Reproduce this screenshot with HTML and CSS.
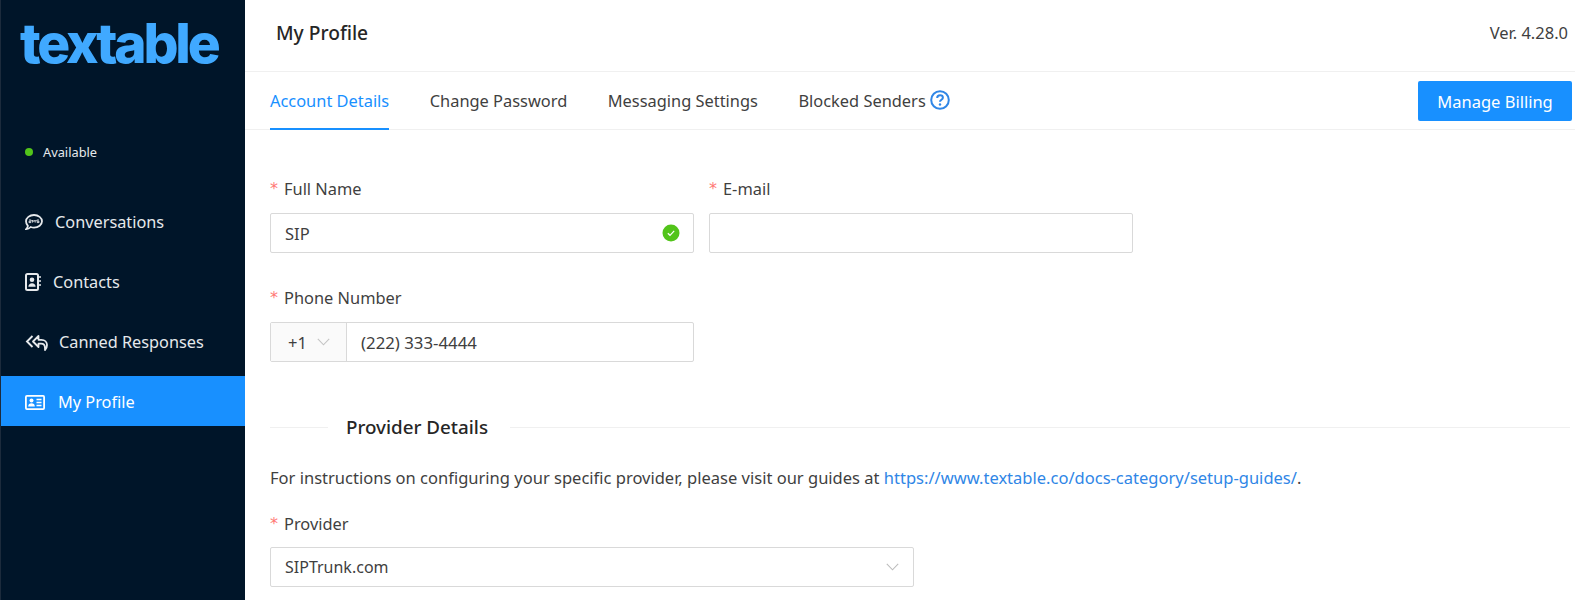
FILE: index.html
```html
<!DOCTYPE html>
<html lang="en">
<head>
<meta charset="utf-8">
<title>My Profile</title>
<link rel="stylesheet" href="styles.css">
</head>
<body>
<div class="app">
  <aside class="sidebar">
    <div class="logo">textable</div>
    <div class="status"><span class="dot"></span><span>Available</span></div>
    <nav class="nav">
      <a class="nav-item">
        <svg class="nav-icon" width="18" height="17" viewBox="0 0 18 17"><path d="M9 1c4.400 0 8 2.800 8 6.300s-3.600 6.300-8 6.300c-1.200 0-2.300-.2-3.300-.6-.9 1-2.500 2.200-4.500 2.200.8-.9 1.500-2.100 1.700-3.300C1.800 10.700 1 9.100 1 7.300 1 3.800 4.600 1 9 1z" fill="none" stroke="currentColor" stroke-width="1.800"/><path d="M4 6h2.200v1.300H4v1.300h2.200M7.600 8.600V6l1.300 1.600L10.200 6v2.600M14 6h-2.200v1.300H14v1.300h-2.200" fill="none" stroke="currentColor" stroke-width=".9"/></svg>
        <span>Conversations</span>
      </a>
      <a class="nav-item contacts">
        <svg class="nav-icon" width="16" height="18" viewBox="0 0 16 18"><rect x="1" y="1" width="12" height="16" rx="1.500" fill="none" stroke="currentColor" stroke-width="2"/><circle cx="7" cy="6.800" r="2.300" fill="currentColor"/><path d="M3.400 13.800c0-2.300 1.500-3.500 3.600-3.500s3.600 1.200 3.600 3.500z" fill="currentColor"/><path d="M14 4h2M14 8h2M14 12h2" stroke="currentColor" stroke-width="1.600"/></svg>
        <span>Contacts</span>
      </a>
      <a class="nav-item canned">
        <svg class="nav-icon" width="23" height="17" viewBox="0 0 23 17"><path d="M7.500 2 2 7.500 7.500 13" fill="none" stroke="currentColor" stroke-width="1.900"/><path d="M13.500 2 8 7.500l5.500 5.500v-3.300h2.500c2.600 0 4 1.400 4 4.300v2c1.600-1.400 2-3.200 2-5 0-3-2.200-5.200-5.500-5.200h-3z" fill="none" stroke="currentColor" stroke-width="1.800" stroke-linejoin="round"/></svg>
        <span>Canned Responses</span>
      </a>
      <a class="nav-item active">
        <svg class="nav-icon" width="20" height="15" viewBox="0 0 20 15"><rect x=".9" y=".9" width="18.200" height="13.200" rx="1" fill="none" stroke="currentColor" stroke-width="1.800"/><circle cx="6.500" cy="5.400" r="2" fill="currentColor"/><path d="M3.200 11.400c0-2 1.400-3.100 3.300-3.100s3.300 1.100 3.300 3.100z" fill="currentColor"/><path d="M11.500 4.500h5M11.500 7.500h5M11.500 10.500h5" stroke="currentColor" stroke-width="1.300"/></svg>
        <span>My Profile</span>
      </a>
    </nav>
  </aside>
  <main class="main">
    <header class="topbar">
      <h1 class="title">My Profile</h1>
      <span class="version">Ver. 4.28.0</span>
    </header>
    <div class="tabs">
      <a class="tab current">Account Details</a>
      <a class="tab">Change Password</a>
      <a class="tab">Messaging Settings</a>
      <a class="tab">Blocked Senders
        <svg class="help" width="20" height="20" viewBox="0 0 20 20"><circle cx="10" cy="10" r="8.800" fill="none" stroke="#2f86e6" stroke-width="2"/><path d="M7.200 8c0-1.700 1.200-2.700 2.900-2.700s2.800 1 2.800 2.400c0 2-2.900 2-2.900 4" fill="none" stroke="#2f86e6" stroke-width="2"/><circle cx="10" cy="14.500" r="1.200" fill="#2f86e6"/></svg>
      </a>
      <button class="billing">Manage Billing</button>
    </div>
    <form class="form">
      <div class="row">
        <div class="field">
          <label class="label"><i>*</i>Full Name</label>
          <div class="input">SIP
            <svg class="ok" width="18" height="18" viewBox="0 0 18 18"><circle cx="9" cy="9" r="8.500" fill="#52c41a"/><path d="M5.800 9.200 8 11.300l4.200-4.400" fill="none" stroke="#fff" stroke-width="1.200"/></svg>
          </div>
        </div>
        <div class="field">
          <label class="label"><i>*</i>E-mail</label>
          <div class="input"></div>
        </div>
      </div>
      <div class="row">
        <div class="field">
          <label class="label"><i>*</i>Phone Number</label>
          <div class="input phone">
            <div class="prefix">+1
              <svg width="13" height="8" viewBox="0 0 13 8"><path d="M.8.8 6.500 6.800 12.200.8" fill="none" stroke="#c4c4c4" stroke-width="1.100"/></svg>
            </div>
            <div class="number">(222) 333-4444</div>
          </div>
        </div>
      </div>
      <div class="divider"><span>Provider Details</span></div>
      <p class="note">For instructions on configuring your specific provider, please visit our guides at <a href="#">https://www.textable.co/docs-category/setup-guides/</a>.</p>
      <div class="field wide">
        <label class="label"><i>*</i>Provider</label>
        <div class="input">SIPTrunk.com
          <svg class="chev" width="13" height="8" viewBox="0 0 13 8"><path d="M.8.8 6.500 6.800 12.200.8" fill="none" stroke="#bdbdbd" stroke-width="1.100"/></svg>
        </div>
      </div>
    </form>
  </main>
</div>
</body>
</html>
```

FILE: styles.css
```css
* { box-sizing: border-box; }
html, body { margin: 0; height: 100%; overflow: hidden; }
body { font-family: "Noto Sans", "Open Sans", sans-serif; font-size: 16px; color: #3f3f3f; background: #fff; }
.app { display: flex; height: 600px; }

.sidebar { width: 245px; flex: none; background: #001529; color: #e6e9ec; border-left: 1px solid #1c2b3c; }
.logo { font-family: Inter, sans-serif; font-weight: 800; font-size: 55px; line-height: 60px; letter-spacing: -3.200px; color: #40a9ff; padding: 13px 0 0 19px; height: 116px; }
.status { display: flex; align-items: center; gap: 10px; height: 80px; padding: 0 0 8px 24px; font-size: 12.800px; }
.dot { width: 8px; height: 8px; border-radius: 50%; background: #52c41a; }
.nav { display: flex; flex-direction: column; }
.nav-item { display: flex; align-items: center; gap: 12px; height: 50px; margin-bottom: 10px; padding: 2px 0 0 24px; font-size: 16.300px; }
.canned { gap: 11px; }
.active { background: #1890ff; color: #fff; gap: 13px; }

.main { flex: 1; min-width: 0; }
.topbar { display: flex; justify-content: space-between; align-items: center; height: 72px; padding: 0 7px 7px 31px; border-bottom: 1px solid #f0f0f0; }
.title { margin: 0; font-size: 19.200px; font-weight: 500; color: #262626; }
.version { font-size: 16.500px; }
.tabs { display: flex; align-items: stretch; gap: 40.500px; height: 58px; padding: 0 3px 0 25px; border-bottom: 1px solid #f0f0f0; }
.tab { display: flex; align-items: center; gap: 4px; padding-bottom: 2px; font-size: 16.400px; margin-bottom: -1px; white-space: nowrap; }
.tab.current { padding-bottom: 0; color: #1890ff; border-bottom: 2px solid #1890ff; }
.help { flex: none; }
.billing { margin: 9px 0 auto auto; width: 154px; height: 40px; border: 0; border-radius: 2px; background: #1890ff; color: #fff; font: inherit; font-size: 16.500px; }

.form { padding: 0 5px 0 25px; }
.row { display: flex; gap: 15px; }
.field { width: 424px; }
.row:first-child .field { padding-top: 46px; height: 121px; }
.row + .row .field { padding-top: 34px; }
.label { display: flex; align-items: center; height: 24px; font-size: 16.400px; color: #3f3f3f; }
.label i { font-style: normal; color: #ff7875; margin-right: 6px; font-family: "DejaVu Sans", sans-serif; font-size: 16px; }
.input { display: flex; align-items: center; height: 40px; margin-top: 13px; padding: 0 14px; border: 1px solid #d9d9d9; border-radius: 2px; font-size: 16.500px; }
.ok, .chev { margin-left: auto; }
.ok { margin-right: -1px; }
.phone { padding: 0; }
.prefix { display: flex; align-items: center; gap: 10px; width: 76px; height: 100%; padding-left: 17px; background: #fafafa; border-right: 1px solid #d9d9d9; }
.number { padding-left: 14px; font-size: 16.800px; }
.divider { display: flex; align-items: center; gap: 18px; margin-top: 49px; height: 32px; font-size: 18.800px; font-weight: 500; color: #262626; }
.divider span { padding-right: 4px; }
.divider::before { content: ""; width: 58px; border-top: 1px solid #f0f0f0; }
.divider::after { content: ""; flex: 1; border-top: 1px solid #f0f0f0; }
.note { margin: 0; padding-top: 23px; line-height: 24px; font-size: 16.520px; white-space: nowrap; }
.note a { color: #2f86e6; text-decoration: none; }
.wide { width: 644px; padding-top: 21px; }
.wide .input { margin-top: 12px; font-size: 16px; }
```
